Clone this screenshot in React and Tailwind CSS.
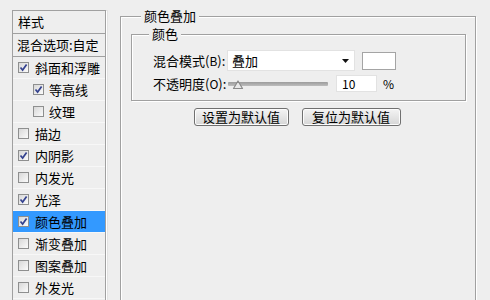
const font = { fontFamily: '"Noto Sans CJK SC", "Liberation Sans", sans-serif' };

const items = [
  { t: '斜面和浮雕', on: true },
  { t: '等高线', on: true, sub: true },
  { t: '纹理', on: false, sub: true },
  { t: '描边', on: false },
  { t: '内阴影', on: true },
  { t: '内发光', on: false },
  { t: '光泽', on: true },
  { t: '颜色叠加', on: true, active: true },
  { t: '渐变叠加', on: false },
  { t: '图案叠加', on: false },
  { t: '外发光', on: false },
];

function Check({ on }) {
  return (
    <span className="w-[11px] h-[11px] border border-[#8e8f8f] bg-linear-to-br from-[#d8d8d8] to-[#fbfbfb] flex items-center justify-center shrink-0">
      {on && (
        <svg width="9" height="9" viewBox="0 0 9 9">
          <path d="M1.5 4.5 L3.6 7 L7.6 1.5" stroke="#34428f" strokeWidth="1.7" fill="none" />
        </svg>
      )}
    </span>
  );
}

export default function App() {
  return (
    <div className="w-[490px] h-[300px] overflow-hidden bg-[#eeeeee] flex text-[13px] text-black" style={font}>
      {/* style list */}
      <div className="ml-[12px] mt-[10px] w-[94px] h-[320px] border border-[#a0a0a0] shadow-[1px_1px_0_#fff,2px_0_0_#e2e2e2] shrink-0">
        <div className="h-[23px] leading-[22px] pl-[5px] border-b border-[#a0a0a0]">样式</div>
        <div className="h-[23px] leading-[22px] pl-[4px] border-b border-[#a0a0a0] whitespace-nowrap">混合选项:自定</div>
        {items.map((it) => (
          <div
            key={it.t}
            className={`h-[22px] flex items-center border-b border-[#f7f7f7] whitespace-nowrap ${
              it.sub ? 'pl-[20px] gap-[5px]' : 'pl-[5px] gap-[6px]'
            } ${it.active ? 'bg-[#3399ff]' : ''}`}
          >
            <Check on={it.on} />
            <span className="leading-[22px]">{it.t}</span>
          </div>
        ))}
      </div>

      {/* color overlay panel */}
      <div className="ml-[14px] mt-[8px] shrink-0">
        <fieldset className="w-[356px] h-[320px] border border-[#a0a0a0] shadow-[inset_1px_1px_0_#fff,1px_1px_0_#fff]">
          <legend className="ml-[20px] px-[3px] leading-[16px] bg-[#eeeeee]">颜色叠加</legend>
          <fieldset className="mt-[2px] ml-[10px] w-[335px] border border-[#a0a0a0] shadow-[inset_1px_1px_0_#fff,1px_1px_0_#fff] pt-[8px] pb-[8px]">
            <legend className="ml-[17px] px-[3px] leading-[16px] bg-[#eeeeee]">颜色</legend>
            <div className="flex items-center pl-[21px] h-[21px]">
              <span className="w-[74px] whitespace-nowrap">混合模式(<span className="text-[12px]">B</span>):</span>
              <div className="w-[128px] h-[21px] bg-white border border-[#e2e2e2] flex items-center justify-between pl-[4px] pr-[5px]">
                <span>叠加</span>
                <svg width="7" height="4" viewBox="0 0 7 4">
                  <path d="M0 0 L7 0 L3.5 4 Z" fill="#111" />
                </svg>
              </div>
              <div className="ml-[7px] w-[34px] h-[18px] bg-white border border-[#a4a4a4]" />
            </div>
            <div className="flex items-center pl-[21px] mt-[4px] h-[17px]">
              <span className="w-[75px] whitespace-nowrap">不透明度(<span className="text-[12px]">O</span>):</span>
              <div className="relative w-[100px] h-[17px] flex items-center">
                <div className="w-full h-[4px] bg-linear-to-b from-[#9c9c9c] to-[#bdbdbd] rounded-[1px]" />
                <svg className="absolute left-[4px] top-[4px]" width="12" height="11" viewBox="0 0 12 11">
                  <path d="M1.5 9.5 L6 2 L10.5 9.5 Z" fill="#e9e9e9" stroke="#8a8a8a" strokeWidth="1.2" strokeLinejoin="round" />
                </svg>
              </div>
              <div className="ml-[8px] w-[41px] h-[17px] bg-white border border-[#e2e2e2] pl-[5px] leading-[15px] text-[12px]">10</div>
              <span className="ml-[6px] text-[12px]">%</span>
            </div>
          </fieldset>
          <div className="flex justify-center gap-[13px] mt-[7px] pr-[2px]">
            <button className="w-[95px] h-[18px] border border-[#707070] rounded-[3px] bg-linear-to-b from-[#f4f4f4] to-[#d6d6d6] leading-[16px] text-[13px] shadow-[inset_0_0_0_1px_#fcfcfc]">
              设置为默认值
            </button>
            <button className="w-[99px] h-[18px] border border-[#707070] rounded-[3px] bg-linear-to-b from-[#f4f4f4] to-[#d6d6d6] leading-[16px] text-[13px] shadow-[inset_0_0_0_1px_#fcfcfc]">
              复位为默认值
            </button>
          </div>
        </fieldset>
      </div>
    </div>
  );
}
